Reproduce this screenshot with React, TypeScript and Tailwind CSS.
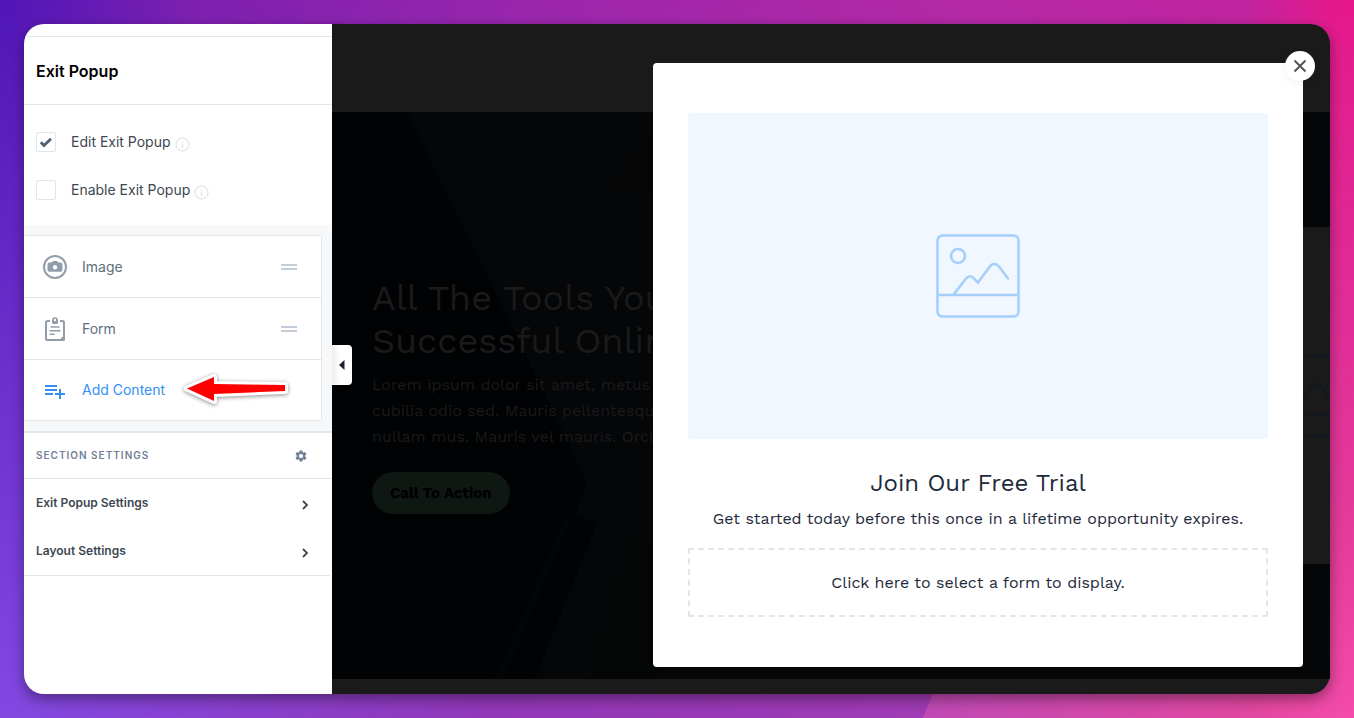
import React, { useState } from 'react';
import { MdSettings } from 'react-icons/md';

const ImageIcon = () => (
  <svg width="26" height="26" viewBox="0 0 26 26" fill="none" aria-hidden="true">
    <circle cx="13" cy="13" r="11" stroke="#929dab" strokeWidth="2" />
    <path
      fillRule="evenodd"
      fill="#929dab"
      d="M7.5 8.5h2L11 7h4l1.5 1.5h2a2 2 0 0 1 2 2v5.3a2 2 0 0 1-2 2h-11a2 2 0 0 1-2-2v-5.3a2 2 0 0 1 2-2zM13 11a2.200 2.200 0 1 0 0 4.400 2.200 2.200 0 0 0 0-4.400z"
    />
  </svg>
);

const FormIcon = () => (
  <svg width="26" height="26" viewBox="0 0 26 26" fill="none" aria-hidden="true">
    <path
      d="M8 5H5.600A1.600 1.600 0 0 0 4 6.600v15.800A1.600 1.600 0 0 0 5.600 24h13l3.400-3V6.600A1.600 1.600 0 0 0 20.400 5H18"
      stroke="#929dab"
      strokeWidth="2"
    />
    <path d="M23 18v5.500a1.500 1.500 0 0 1-1.500 1.500H17c1.500-.5 2.300-1.500 2.500-3 1.500-.3 2.800-1.800 3.500-4z" fill="#929dab" />
    <path
      fillRule="evenodd"
      fill="#929dab"
      d="M10 7V4.200a3 3 0 0 1 6 0V7l-1 1h-4zM13 2.800a1.200 1.200 0 1 0 0 2.400 1.200 1.200 0 0 0 0-2.400z"
    />
    <path d="M8.500 11h9M7.500 14.700h11M7.500 18.300h5" stroke="#929dab" strokeWidth="1.600" />
  </svg>
);

const AddContentIcon = () => (
  <svg width="26" height="26" viewBox="0 0 26 26" fill="none" aria-hidden="true">
    <path d="M3 9h12M3 13h12M3 17h8M18 12v10M13 17h10" stroke="#3490f3" strokeWidth="2" />
  </svg>
);

const InfoIcon = () => (
  <svg width="15" height="15" viewBox="0 0 15 15" fill="none" className="mt-1" aria-hidden="true">
    <circle cx="7.5" cy="7.5" r="6.5" stroke="#e8e8e8" strokeWidth="1.4" />
    <path d="M7.5 6.5V11M7.5 4v1.4" stroke="#e4e4e4" strokeWidth="1.4" />
  </svg>
);

const Chevron = () => (
  <svg width="8" height="12" viewBox="0 0 8 12" fill="none" className="mt-1" aria-hidden="true">
    <path d="M2 2l4 4-4 4" stroke="#3d4852" strokeWidth="1.8" />
  </svg>
);

const PointerArrow = () => (
  <svg
    width="112"
    height="36"
    viewBox="0 0 112 36"
    className="ml-4 drop-shadow-[0_1px_2px_rgba(0,0,0,0.45)]"
    aria-hidden="true"
  >
    <path
      d="M6 16.5L33 5v7l71 1v6l-71 3v7z"
      fill="#ff0000"
      stroke="#ffffff"
      strokeWidth="6"
      strokeLinejoin="round"
      paintOrder="stroke"
    />
  </svg>
);

const Placeholder = ({ className }: { className?: string }) => (
  <svg width="84" height="84" viewBox="0 0 84 84" fill="none" className={className} aria-hidden="true">
    <g stroke="currentColor" strokeWidth="2.6">
      <rect x="1.5" y="1.5" width="81" height="81" rx="5" />
      <path d="M2 61h80" />
      <circle cx="22" cy="22" r="7" />
      <path d="M18 60l12-15.500c2.500-3 5.500-3 8 0l4 4 11.500-15.500c2.500-4 6.500-4 9.500-.500l9 12" strokeLinecap="round" />
    </g>
  </svg>
);

const DragHandle = () => (
  <svg width="16" height="6" viewBox="0 0 16 6" className="ml-auto mr-6" aria-hidden="true">
    <path d="M0 1h16M0 5h16" stroke="#c3cdd9" strokeWidth="2" />
  </svg>
);

const CheckRow = ({ id, label, defaultChecked }: { id: string; label: string; defaultChecked: boolean }) => (
  <div className="flex h-12 items-center">
    <span className="relative flex">
      <input
        id={id}
        type="checkbox"
        defaultChecked={defaultChecked}
        className="peer h-5 w-5 appearance-none rounded-xs border border-[#e2e6ec] bg-white"
      />
      <svg
        width="20"
        height="20"
        viewBox="0 0 20 20"
        fill="none"
        className="pointer-events-none absolute inset-0 hidden peer-checked:block"
        aria-hidden="true"
      >
        <path d="M4.800 10.300l3.200 3.200 7-6.800" stroke="#526070" strokeWidth="2.800" />
      </svg>
    </span>
    <label htmlFor={id} className="ml-[15px] mr-1 text-sm text-[#3d4852]">
      {label}
    </label>
    <InfoIcon />
  </div>
);

const contentItems = [
  { label: 'Image', icon: <ImageIcon /> },
  { label: 'Form', icon: <FormIcon /> },
];

const Sidebar = () => (
  <aside className="w-[308px] shrink-0 bg-white">
    <div className="h-[13px] border-b border-[#e2e5eb]" />
    <header className="flex h-[68px] items-center border-b border-[#e2e5eb] px-3">
      <h2 className="text-base font-semibold text-black">Exit Popup</h2>
    </header>

    <div className="px-3 pt-[13px] pb-[11px]">
      <CheckRow id="edit-popup" label="Edit Exit Popup" defaultChecked={true} />
      <CheckRow id="enable-popup" label="Enable Exit Popup" defaultChecked={false} />
    </div>

    {/* Content blocks */}
    <div className="border-b-2 border-[#e4e7ec] bg-[#f7f8fa] py-[10px] pr-[10px]">
      <ul className="rounded-r-xs border-y border-r border-[#e2e5eb] bg-white">
        {contentItems.map((item) => (
          <li key={item.label} className="flex h-[62px] items-center border-b border-[#e2e5eb] pl-[18px]">
            {item.icon}
            <span className="ml-[14px] text-sm text-[#606f7b]">{item.label}</span>
            <DragHandle />
          </li>
        ))}
        <li className="flex h-[60px] items-center pl-[18px]">
          <button type="button" className="flex items-center text-sm text-[#3490f3]">
            <AddContentIcon />
            <span className="ml-[14px]">Add Content</span>
          </button>
          <PointerArrow />
        </li>
      </ul>
    </div>

    {/* Section settings */}
    <div className="flex h-[46px] items-center justify-between border-b border-[#e2e5eb] pl-3 pr-6">
      <h3 className="text-[10px] font-semibold tracking-widest text-[#718096]">SECTION SETTINGS</h3>
      <button type="button" aria-label="Section settings">
        <MdSettings className="h-[14px] w-[14px] text-[#718096]" />
      </button>
    </div>
    <nav className="mr-[2px] border-b border-[#e2e5eb]">
      {['Exit Popup Settings', 'Layout Settings'].map((label) => (
        <button
          key={label}
          type="button"
          className="flex h-12 w-full items-center justify-between pl-3 pr-[21px] text-xs font-semibold text-[#3d4852]"
        >
          {label}
          <Chevron />
        </button>
      ))}
    </nav>
  </aside>
);

const Hero = () => (
  <section className="relative flex flex-1 items-center overflow-hidden bg-[#010203] pl-10">
    <svg
      className="absolute inset-0 h-full w-full"
      viewBox="0 0 998 567"
      preserveAspectRatio="xMinYMin slice"
      aria-hidden="true"
    >
      <path d="M75 0h923v567H203L265 410l-22-6 12-34L133 118z" fill="#040608" />
      <path d="M235 400l6 3-69 164h-10z" fill="#020405" />
      <path d="M303 425l16 10v132h-60z" fill="#040505" />
      <path d="M321 22l-42 55 42 2z" fill="#040504" />
    </svg>
    <div className="relative min-w-0 flex-1 whitespace-nowrap">
      <h1 className="text-4xl/[43px] text-[#1a1a1a]">
        All The Tools You
        <br />
        Successful Online
      </h1>
      <p className="mt-[9px] text-base/[26px] text-[#1a1a1a]">
        Lorem ipsum dolor sit amet, metus
        <br />
        cubilia odio sed. Mauris pellentesque
        <br />
        nullam mus. Mauris vel mauris. Orci
      </p>
      <button
        type="button"
        className="mt-[22px] h-[42px] rounded-full bg-[#0f1712] px-[18px] text-[15px] font-bold text-black"
      >
        Call To Action
      </button>
    </div>
    <div className="relative -mr-3 flex h-[337px] w-1/2 items-center justify-end bg-[#1a1a1a]">
      <Placeholder className="text-[#12181e]" />
    </div>
  </section>
);

const ExitPopup = ({ onClose }: { onClose: () => void }) => (
  <div
    role="dialog"
    aria-labelledby="popup-title"
    className="absolute top-[39px] right-[27px] w-[650px] rounded bg-white px-[35px] py-[50px] text-center text-[#1e2a3b]"
  >
    <button
      type="button"
      aria-label="Close"
      onClick={onClose}
      className="absolute -top-3 -right-3 flex h-[30px] w-[30px] items-center justify-center rounded-full bg-white shadow-[0_2px_10px_rgba(0,0,0,0.06)]"
    >
      <svg width="14" height="14" viewBox="0 0 14 14" fill="none" aria-hidden="true">
        <path d="M1.500 1.500l11 11M12.500 1.500l-11 11" stroke="#555555" strokeWidth="2" />
      </svg>
    </button>
    <div className="flex h-[326px] items-center justify-center rounded bg-[#f0f7ff]">
      <Placeholder className="text-[#a6d0fb]" />
    </div>
    <h2 id="popup-title" className="mt-7 text-2xl">
      Join Our Free Trial
    </h2>
    <p className="mt-[7px] text-base/[26px]">Get started today before this once in a lifetime opportunity expires.</p>
    <button type="button" className="mt-4 h-[69px] w-full rounded-xs border-2 border-dashed border-[#e2e5ec]">
      Click here to select a form to display.
    </button>
  </div>
);

const App = () => {
  const [popupOpen, setPopupOpen] = useState(true);

  return (
    <div className="relative flex min-h-screen bg-[linear-gradient(92deg,#4f16b8_0%,#7d20b0_14%,#9a26ac_38%,#b529a6_70%,#c0249f_90%,#e6198c_97%)] p-6 font-[Inter,sans-serif]">
      {/* lower half of the backdrop fades in over the upper one */}
      <div className="absolute inset-0 bg-[linear-gradient(113deg,#8249e2_18%,#9138b8_48%,#a03bb5_74%,#c04ab5_74%,#e2489f_94%,#f54cab_100%)] [mask-image:linear-gradient(to_bottom,transparent,black)]" />
      <div className="relative flex flex-1 overflow-hidden rounded-[20px] shadow-[0_5px_14px_rgba(0,0,0,0.4)]">
        <Sidebar />
        <main className="relative flex min-w-0 flex-1 flex-col bg-[#1a1a1a] font-['Work_Sans',Inter,sans-serif]">
          <div className="h-[88px]" />
          <Hero />
          <div className="h-[15px]" />
          <button
            type="button"
            aria-label="Collapse panel"
            className="absolute top-[321px] left-0 flex h-10 w-5 items-center justify-center rounded-r bg-[linear-gradient(90deg,#eeeeee,#ffffff_40%)]"
          >
            <svg width="6" height="10" viewBox="0 0 6 10" aria-hidden="true">
              <path d="M5.500 0v10L0 5z" fill="#1a202c" />
            </svg>
          </button>
          {popupOpen && <ExitPopup onClose={() => setPopupOpen(false)} />}
        </main>
      </div>
    </div>
  );
};

export default App;
